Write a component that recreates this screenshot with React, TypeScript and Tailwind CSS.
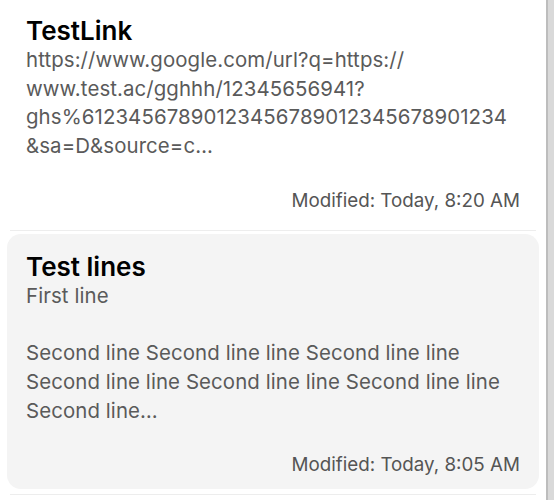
const notes = [
  {
    title: "TestLink",
    lines: [
      "https://www.google.com/url?q=https://",
      "www.test.ac/gghhh/12345656941?",
      "ghs%61234567890123456789012345678901234",
      "&sa=D&source=c…",
    ],
    modified: "Modified: Today, 8:20 AM",
    selected: false,
  },
  {
    title: "Test lines",
    lines: [
      "First line",
      "",
      "Second line Second line line Second line line",
      "Second line line Second line line Second line line",
      "Second line…",
    ],
    modified: "Modified: Today, 8:05 AM",
    selected: true,
  },
];

function NoteRow({ note }: { note: (typeof notes)[number] }) {
  return (
    <div className="flex flex-col">
      <div
        className={
          "mx-[7px] mt-[3px] mb-[5px] rounded-[14px] px-[19px] pt-[18px] pb-3 " +
          (note.selected ? "bg-[#f4f4f4]" : "bg-white")
        }
      >
        <h2 className="text-[26px] leading-[30px] font-semibold text-black">{note.title}</h2>
        <div className="text-[20.4px] leading-[28.7px] text-[#5a5a5a] tracking-[0.1px]">
          {note.lines.map((l, i) => (
            <div key={i} className="whitespace-nowrap h-[28.7px]">
              {l}
            </div>
          ))}
        </div>
        <div className="mt-[28px] text-right text-[18.8px] leading-6 text-[#555555]">{note.modified}</div>
      </div>
      <div className="mx-[10px] h-px bg-[#ededed]" />
    </div>
  );
}

export default function App() {
  return (
    <div
      className="flex h-[500px] w-[554px] overflow-hidden bg-white"
      style={{ fontFamily: "Inter, 'Noto Sans', sans-serif" }}
    >
      <div className="flex-1 -mt-[5px]">
        {notes.map((n) => (
          <NoteRow key={n.title} note={n} />
        ))}
      </div>
      <div className="w-2 h-full border-l-2 border-[#bdbdbd] bg-[#d9d9d9]" />
    </div>
  );
}
